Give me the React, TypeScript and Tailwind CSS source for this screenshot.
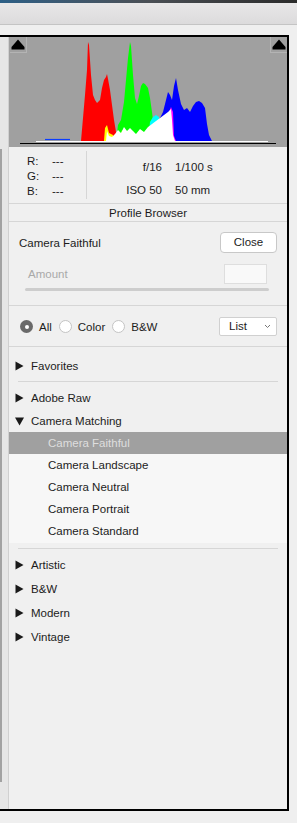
import React from 'react'

const font = { fontFamily: '"Liberation Sans", Arial, sans-serif' }

const ClipIcon = () => (
  <div className="w-[17px] h-[16px] border-r border-b border-[#b4b4b4] flex items-center justify-center">
    <svg width="14" height="11" viewBox="0 0 14 11">
      <path d="M0.5 8 L4 4 L7 0.5 L10 4 L13.5 8 L13.5 10.5 L0.5 10.5 Z" fill="#000" />
    </svg>
  </div>
)

const Histogram = () => (
  <div className="relative h-[110px] bg-[#a0a0a0]">
    <svg className="absolute inset-0" width="278" height="110" viewBox="9 37 278 110">
      {/* red */}
      <polygon
        fill="#ff0000"
        points="81,141 83,118 85,95 87,70 88,42 89,45 91,75 93,95 95,100 97,103 100,100 102,88 104,80 106,77 107,74 108,79 110,90 112,105 114,120 116,132 117,141"
      />
      {/* green */}
      <polygon
        fill="#00ff00"
        points="116,141 118,125 121,120 124,102 126,80 128,58 130,42 131,46 133,75 135,98 137,104 139,96 141,86 143,83 145,84 148,88 150,98 152,112 154,128 156,141"
      />
      {/* blue */}
      <polygon
        fill="#0000ff"
        points="155,141 157,122 160,118 163,112 166,100 168,92 170,95 172,100 174,86 176,78 178,90 181,104 184,110 187,108 190,112 193,106 196,102 199,101 202,103 205,108 207,124 209,135 212,141"
      />
      {/* overlaps */}
      <polygon fill="#ffff00" points="104,141 105,128 107,125 109,133 113,135 115,141" />
      <polygon fill="#ffff00" points="120,141 122,130 125,134 128,141" />
      <polygon fill="#00ffff" points="148,141 150,122 153,117 156,115 159,117 161,141" />
      <polygon fill="#ff00ff" points="168,141 169,112 171,107 173,112 174,136 176,141" />
      {/* white */}
      <polygon
        fill="#ffffff"
        points="106,141 107,131 109,136 112,137 115,134 118,130 121,133 124,127 127,131 130,128 133,131 136,134 140,129 144,132 148,127 152,124 156,121 160,118 164,115 168,112 171,109 172,120 173,135 175,141"
      />
      <line x1="45" y1="139.5" x2="70" y2="139.5" stroke="#0a3cff" strokeWidth="1.2" />
      <line x1="36" y1="141.5" x2="268" y2="141.5" stroke="#ffffff" strokeWidth="1" />
      <line x1="20" y1="143.5" x2="276" y2="143.5" stroke="#000000" strokeWidth="1" />
    </svg>
    <div className="absolute left-[1px] top-0">
      <ClipIcon />
    </div>
    <div className="absolute right-0 top-0 [&>div]:border-l [&>div]:border-r-0">
      <ClipIcon />
    </div>
  </div>
)

const Radio = ({ on, label }: { on?: boolean; label: string }) => (
  <div className="flex items-center gap-[6px]">
    {on ? (
      <span className="w-[13px] h-[13px] rounded-full bg-[#6a6a6a] flex items-center justify-center">
        <span className="w-[4px] h-[4px] rounded-full bg-white" />
      </span>
    ) : (
      <span className="w-[13px] h-[13px] rounded-full bg-white border border-[#c4c4c4]" />
    )}
    <span className="pt-[2px]">{label}</span>
  </div>
)

const Right = () => (
  <svg width="9" height="10" viewBox="0 0 9 10">
    <path d="M0.5 0.5 L8.5 5 L0.5 9.5 Z" fill="#1a1a1a" />
  </svg>
)

const Down = () => (
  <svg width="9" height="9" viewBox="0 0 9 9">
    <path d="M0 0.5 L9 0.5 L4.5 8.5 Z" fill="#1a1a1a" />
  </svg>
)

const Group = ({ label, open, h = 'h-[24px]' }: { label: string; open?: boolean; h?: string }) => (
  <div className={h + ' flex items-center pl-[6px]'}>
    <span className="w-[16px] flex items-center pt-[2px]">{open ? <Down /> : <Right />}</span>
    <span className="pt-[3px]">{label}</span>
  </div>
)

const Sep = ({ className }: { className: string }) => (
  <div className={'mx-[9px] h-px bg-[#d6d6d6] ' + className} />
)

export default function App() {
  return (
    <div className="w-[297px] h-[823px] bg-[#efefef] text-[#1c1c1c] text-[11.5px]" style={font}>
      {/* window chrome */}
      <div className="h-[3px] bg-gradient-to-r from-[#2c5f86] via-[#4a4f55] to-[#2b2b2b]" />
      <div className="h-[22px] bg-gradient-to-b from-[#e8e7e8] to-[#dcdbdc] border-b border-[#c4c4c4]" />
      <div className="h-[10px]" />

      <div className="w-[289px] h-[776px] border-t-2 border-r-2 border-b-2 border-black flex">
        {/* left edge strip */}
        <div className="w-[9px] flex">
          <div className="w-[2px] flex flex-col">
            <div className="h-[112px] bg-[#e6e6e6]" />
            <div className="flex-1 bg-[#a2a2a2]" />
            <div className="h-[27px] bg-[#e6e6e6]" />
          </div>
          <div className="w-[6px] bg-[#e6e6e6]" />
          <div className="w-px bg-[#d0d0d0]" />
        </div>

        <div className="flex-1 bg-[#f0f0f0] flex flex-col">
          <Histogram />

          {/* info */}
          <div className="h-[57px] flex border-b border-[#d6d6d6]">
            <div className="w-[77px] pl-[18px] pt-[7px] flex flex-col leading-[15px]">
              {['R:', 'G:', 'B:'].map((l) => (
                <div key={l} className="flex">
                  <span className="w-[25px]">{l}</span>
                  <span>---</span>
                </div>
              ))}
            </div>
            <div className="w-px bg-[#d6d6d6] my-[4px]" />
            <div className="flex-1 pt-[11px] grid grid-cols-[75px_1fr] gap-x-[13px] leading-[19px]">
              <span className="text-right">f/16</span>
              <span>1/100 s</span>
              <span className="text-right">ISO 50</span>
              <span>50 mm</span>
            </div>
          </div>

          {/* header */}
          <div className="h-[18px] flex items-center justify-center border-b border-[#d6d6d6] pt-[2px]">
            Profile Browser
          </div>

          {/* selected profile */}
          <div className="h-[84px] border-b border-[#d6d6d6] px-[10px] pt-[10px]">
            <div className="flex items-center justify-between">
              <span className="pt-[3px]">Camera Faithful</span>
              <button className="w-[57px] h-[21px] bg-white border border-[#c8c8c8] rounded-[4px] text-[#1c1c1c] pt-[1px]">
                Close
              </button>
            </div>
            <div className="flex items-center justify-between mt-[11px] pl-[9px] pr-[10px]">
              <span className="text-[#a9a9a9] pt-[2px]">Amount</span>
              <div className="w-[43px] h-[20px] bg-[#f9f9f9] border border-[#dedede]" />
            </div>
            <div className="mt-[4px] ml-[6px] mr-[8px] h-[3px] rounded-full bg-[#cdcdcd]" />
          </div>

          {/* filter */}
          <div className="h-[41px] border-b border-[#d6d6d6] flex items-center pl-[11px] pr-[10px]">
            <div className="flex items-center gap-[7px] pt-[1px]">
              <Radio on label="All" />
              <Radio label="Color" />
              <Radio label="B&W" />
            </div>
            <div className="ml-auto w-[58px] h-[19px] bg-white border border-[#d0d0d0] rounded-[2px] flex items-center pl-[9px] pr-[5px]">
              <span className="pt-[2px]">List</span>
              <svg className="ml-auto" width="7" height="5" viewBox="0 0 7 5">
                <path d="M1 1 L3.5 3.5 L6 1" stroke="#777" strokeWidth="1" fill="none" />
              </svg>
            </div>
          </div>

          {/* list */}
          <div className="pt-[6px]">
            <Group label="Favorites" />
            <Sep className="mt-[4px] mb-[3px]" />
            <Group label="Adobe Raw" />
            <Group label="Camera Matching" open h="h-[23px]" />
            <div className="bg-[#f7f7f7] pb-[1px]">
              <div className="h-[22px] bg-[#a0a0a0] text-[#dedede] flex items-center pl-[39px] pt-[2px]">Camera Faithful</div>
              {['Camera Landscape', 'Camera Neutral', 'Camera Portrait', 'Camera Standard'].map((n) => (
                <div key={n} className="h-[22px] flex items-center pl-[39px] pt-[2px]">{n}</div>
              ))}
            </div>
            <Sep className="mt-[5px] mb-[3px]" />
            <Group label="Artistic" />
            <Group label="B&W" />
            <Group label="Modern" />
            <Group label="Vintage" />
          </div>
        </div>
      </div>
    </div>
  )
}
